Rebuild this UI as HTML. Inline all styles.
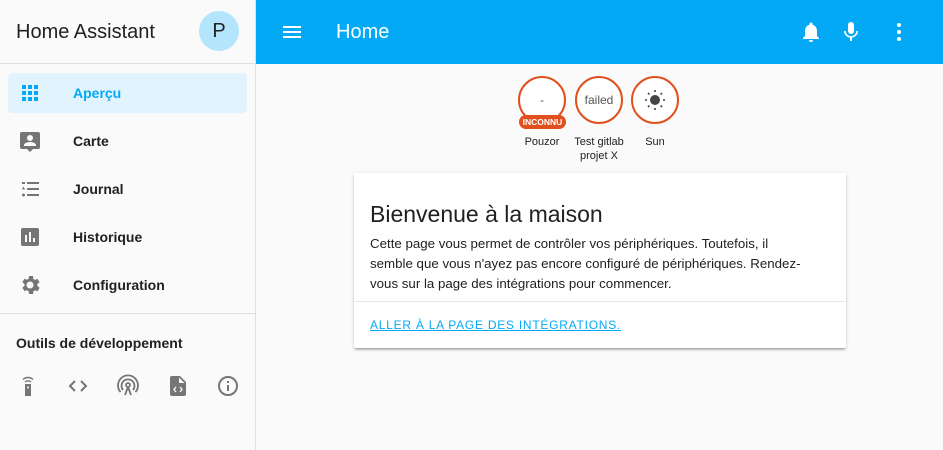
<!DOCTYPE html>
<html><head><meta charset="utf-8"><style>
*{box-sizing:border-box;margin:0;padding:0}
body{width:943px;height:450px;overflow:hidden;font-family:"Liberation Sans",Roboto,sans-serif;background:#fafafa;position:relative}
#side{position:absolute;left:0;top:0;width:256px;height:450px;background:#fafafa;border-right:1px solid #e0e0e0}
#sh{height:64px;border-bottom:1px solid #e0e0e0;position:relative;background:#fafafa}
#sh .t{position:absolute;left:16px;top:21px;font-size:20px;color:#212121}
#sh .av{position:absolute;left:199px;top:11px;width:40px;height:40px;border-radius:50%;background:#b3e5fc;color:#212121;font-size:20px;text-align:center;line-height:40px}
.it{position:absolute;left:8px;width:239px;height:40px;border-radius:4px;font-size:14px;font-weight:bold;color:#212121}
.it span{position:absolute;left:65px;top:12px}
.it svg{position:absolute;left:10px;top:8px}
.sel{background:#e1f4fd;color:#03a9f4}
#div{position:absolute;left:0;top:313px;width:255px;border-top:1px solid #e0e0e0}
#dev{position:absolute;left:16px;top:335px;font-size:14px;font-weight:bold;color:#212121}
.di{position:absolute;top:374px}
#top{position:absolute;left:256px;top:0;width:687px;height:64px;background:#03a9f4;color:#fff}
#top .h{position:absolute;left:80px;top:21px;font-size:20px}
.b{position:absolute;top:76px;width:48px;height:48px;border:2px solid #e0501f;border-radius:50%;background:#fff;text-align:center;line-height:44px;color:#555;font-size:12px}
.bl{position:absolute;font-size:11px;color:#212121;text-align:center;width:70px;line-height:14px}
#card{position:absolute;left:354px;top:173px;width:492px;height:175px;background:#fff;border-radius:2px;box-shadow:0 2px 2px rgba(0,0,0,.14),0 1px 5px rgba(0,0,0,.12),0 3px 1px -2px rgba(0,0,0,.2)}
#card h1{position:absolute;left:16px;top:28px;font-size:23px;font-weight:normal;color:#212121}
#card p{position:absolute;left:16px;top:61px;width:440px;font-size:13.3px;line-height:20px;color:#212121}
#card .a{position:absolute;left:0;top:128px;width:492px;border-top:1px solid #e8e8e8}
#card .a span{position:absolute;left:16px;top:16px;font-size:12px;letter-spacing:0.75px;color:#03a9f4;text-decoration:underline;font-weight:500}
</style></head><body>
<div id="side">
<div id="sh"><div class="t">Home Assistant</div><div class="av">P</div></div>
<div class="it sel" style="top:73px"><svg width="24" height="24" viewBox="0 0 24 24" fill="#03a9f4"><path d="M4 4h4v4H4zM10 4h4v4h-4zM16 4h4v4h-4zM4 10h4v4H4zM10 10h4v4h-4zM16 10h4v4h-4zM4 16h4v4H4zM10 16h4v4h-4zM16 16h4v4h-4z"/></svg><span>Aperçu</span></div>
<div class="it" style="top:121px"><svg width="24" height="24" viewBox="0 0 24 24" fill="#757575"><path d="M4 3h16a2 2 0 0 1 2 2v13a2 2 0 0 1-2 2h-5l-3 3-3-3H4a2 2 0 0 1-2-2V5a2 2 0 0 1 2-2zm8 3a3 3 0 1 0 0 6 3 3 0 0 0 0-6zm-6 11h12v-1c0-2-4-3-6-3s-6 1-6 3z"/></svg><span>Carte</span></div>
<div class="it" style="top:169px"><svg width="24" height="24" viewBox="0 0 24 24" fill="#757575"><path d="M9 5h12v2H9zM9 11h12v2H9zM9 17h12v2H9zM4 5h3v2H4zM5.5 9.5 7 12.5H4zM5.5 16.5a1.5 1.5 0 1 1 0 3 1.5 1.5 0 0 1 0-3z"/></svg><span>Journal</span></div>
<div class="it" style="top:217px"><svg width="24" height="24" viewBox="0 0 24 24" fill="#757575"><path d="M5 3h14a2 2 0 0 1 2 2v14a2 2 0 0 1-2 2H5a2 2 0 0 1-2-2V5a2 2 0 0 1 2-2zm2 7v7h2v-7zm4-3v10h2V7zm4 6v4h2v-4z"/></svg><span>Historique</span></div>
<div class="it" style="top:265px"><svg width="24" height="24" viewBox="0 0 24 24" fill="#757575"><path d="M12 15.5A3.5 3.5 0 1 1 12 8.5a3.5 3.5 0 0 1 0 7zm7.4-2.5a7.6 7.6 0 0 0 0-2l2.1-1.6-2-3.5-2.5 1a7 7 0 0 0-1.7-1L15 3h-4l-.4 2.7a7 7 0 0 0-1.7 1l-2.5-1-2 3.5L6.5 11a7.6 7.6 0 0 0 0 2l-2.1 1.6 2 3.5 2.5-1a7 7 0 0 0 1.7 1L11 21h4l.4-2.7a7 7 0 0 0 1.7-1l2.5 1 2-3.5z"/></svg><span>Configuration</span></div>
<div id="div"></div>
<div id="dev">Outils de développement</div>
<svg class="di" style="left:16px" width="24" height="24" viewBox="0 0 24 24" fill="#757575"><path d="M9 10h6v12H9zM12 12.5a1 1 0 1 0 0 2 1 1 0 0 0 0-2z"/><path d="M8.5 7.5a5 5 0 0 1 7 0l-1 1a3.5 3.5 0 0 0-5 0zM6.5 5a8 8 0 0 1 11 0l-1 1a6.5 6.5 0 0 0-9 0z"/></svg>
<svg class="di" style="left:66px" width="24" height="24" viewBox="0 0 24 24" fill="none" stroke="#757575" stroke-width="2"><path d="M9 7l-5 5 5 5M15 7l5 5-5 5"/></svg>
<svg class="di" style="left:116px" width="24" height="24" viewBox="0 0 24 24" fill="none" stroke="#757575" stroke-width="1.8"><circle cx="12" cy="11" r="2"/><path d="M7 16a6.5 6.5 0 1 1 10 0M4.5 18a10 10 0 1 1 15 0M12 13l-3 8M12 13l3 8"/></svg>
<svg class="di" style="left:166px" width="24" height="24" viewBox="0 0 24 24" fill="#757575"><path d="M6 2h8l6 6v12a2 2 0 0 1-2 2H6a2 2 0 0 1-2-2V4a2 2 0 0 1 2-2zm7 1.5V9h5.5z"/><path d="M10 13l-2 2.5 2 2.5M14 13l2 2.5-2 2.5" stroke="#fff" stroke-width="1.3" fill="none"/></svg>
<svg class="di" style="left:216px" width="24" height="24" viewBox="0 0 24 24" fill="none" stroke="#757575" stroke-width="2"><circle cx="12" cy="12" r="9"/><path d="M12 11v6M12 7v2"/></svg>
</div>
<div id="top">
<svg style="position:absolute;left:24px;top:20px" width="24" height="24" viewBox="0 0 24 24" fill="#fff"><path d="M3 6h18v2H3zM3 11h18v2H3zM3 16h18v2H3z"/></svg>
<div class="h">Home</div>
<svg style="position:absolute;left:543px;top:20px" width="24" height="24" viewBox="0 0 24 24" fill="#fff"><path d="M12 22a2 2 0 0 0 2-2h-4a2 2 0 0 0 2 2zm6-6v-5c0-3-1.6-5.6-4.5-6.3V4a1.5 1.5 0 0 0-3 0v.7C7.6 5.4 6 8 6 11v5l-2 2v1h16v-1z"/></svg>
<svg style="position:absolute;left:583px;top:20px" width="24" height="24" viewBox="0 0 24 24" fill="#fff"><path d="M12 14a3 3 0 0 0 3-3V5a3 3 0 0 0-6 0v6a3 3 0 0 0 3 3zm5.3-3c0 3-2.5 5.1-5.3 5.1S6.7 14 6.7 11H5c0 3.4 2.7 6.2 6 6.7V21h2v-3.3c3.3-.5 6-3.3 6-6.7z"/></svg>
<svg style="position:absolute;left:631px;top:20px" width="24" height="24" viewBox="0 0 24 24" fill="#fff"><circle cx="12" cy="5" r="2"/><circle cx="12" cy="12" r="2"/><circle cx="12" cy="19" r="2"/></svg>
</div>
<div class="b" style="left:518px">-</div>
<div style="position:absolute;left:519px;top:115px;width:47px;height:14px;border-radius:7px;background:#e0501f;color:#fff;font-size:8.5px;font-weight:bold;text-align:center;line-height:14px">INCONNU</div>
<div class="b" style="left:575px">failed</div>
<div class="b" style="left:631px"><svg style="margin-top:10px" width="24" height="24" viewBox="0 0 24 24" fill="#444"><circle cx="12" cy="12" r="5"/><g stroke="#444" stroke-width="1.6"><path d="M12 2v2M12 20v2M2 12h2M20 12h2M5 5l1.4 1.4M17.6 17.6 19 19M5 19l1.4-1.4M17.6 6.4 19 5"/></g></svg></div>
<div class="bl" style="left:507px;top:135px">Pouzor</div>
<div class="bl" style="left:564px;top:135px">Test gitlab<br>projet X</div>
<div class="bl" style="left:620px;top:135px">Sun</div>
<div id="card">
<h1>Bienvenue à la maison</h1>
<p>Cette page vous permet de contrôler vos périphériques. Toutefois, il semble que vous n'ayez pas encore configuré de périphériques. Rendez-vous sur la page des intégrations pour commencer.</p>
<div class="a"><span>ALLER À LA PAGE DES INTÉGRATIONS.</span></div>
</div>
</body></html>
